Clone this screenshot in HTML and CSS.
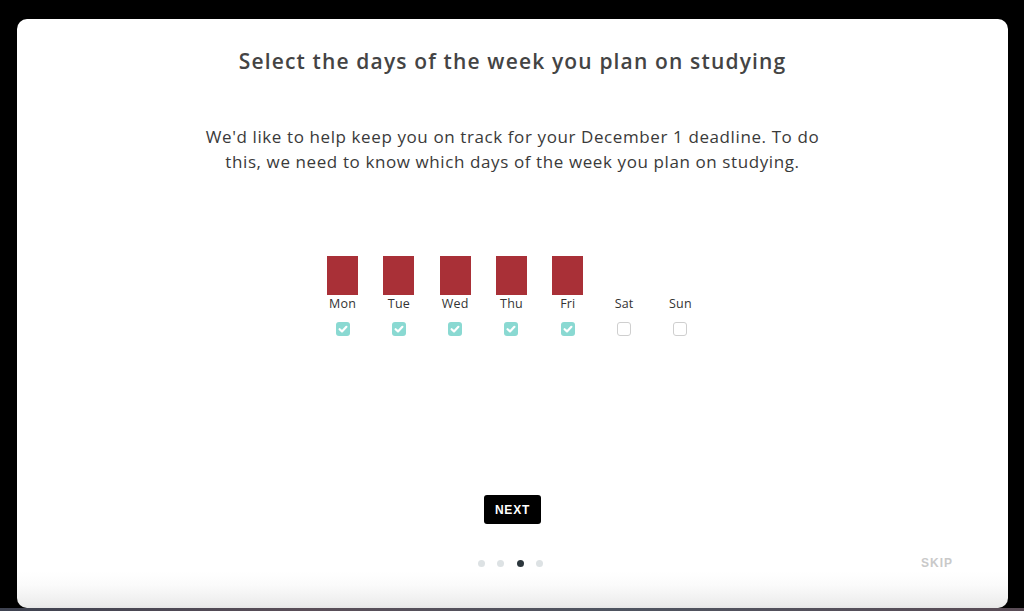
FILE: index.html
```html
<!DOCTYPE html>
<html lang="en">
<head>
<meta charset="utf-8">
<title>Select study days</title>
<link rel="stylesheet" href="styles.css">
</head>
<body>
<div class="card">
  <h1 class="title">Select the days of the week you plan on studying</h1>
  <p class="intro">We'd like to help keep you on track for your December 1 deadline. To do this, we need to know which days of the week you plan on studying.</p>
  <div class="days">
    <div class="day"><div class="bar on"></div><div class="label">Mon</div><span class="check on"><svg viewBox="0 0 14 14" width="14" height="14"><path d="M3.6 7.2 L6 9.4 L10.4 4.8" fill="none" stroke="#fff" stroke-width="2.2" stroke-linecap="round" stroke-linejoin="round"/></svg></span></div>
    <div class="day"><div class="bar on"></div><div class="label">Tue</div><span class="check on"><svg viewBox="0 0 14 14" width="14" height="14"><path d="M3.6 7.2 L6 9.4 L10.4 4.8" fill="none" stroke="#fff" stroke-width="2.2" stroke-linecap="round" stroke-linejoin="round"/></svg></span></div>
    <div class="day"><div class="bar on"></div><div class="label">Wed</div><span class="check on"><svg viewBox="0 0 14 14" width="14" height="14"><path d="M3.6 7.2 L6 9.4 L10.4 4.8" fill="none" stroke="#fff" stroke-width="2.2" stroke-linecap="round" stroke-linejoin="round"/></svg></span></div>
    <div class="day"><div class="bar on"></div><div class="label">Thu</div><span class="check on"><svg viewBox="0 0 14 14" width="14" height="14"><path d="M3.6 7.2 L6 9.4 L10.4 4.8" fill="none" stroke="#fff" stroke-width="2.2" stroke-linecap="round" stroke-linejoin="round"/></svg></span></div>
    <div class="day"><div class="bar on"></div><div class="label">Fri</div><span class="check on"><svg viewBox="0 0 14 14" width="14" height="14"><path d="M3.6 7.2 L6 9.4 L10.4 4.8" fill="none" stroke="#fff" stroke-width="2.2" stroke-linecap="round" stroke-linejoin="round"/></svg></span></div>
    <div class="day"><div class="bar"></div><div class="label">Sat</div><span class="check"></span></div>
    <div class="day"><div class="bar"></div><div class="label">Sun</div><span class="check"></span></div>
  </div>
  <button class="next">NEXT</button>
  <div class="footer">
    <div class="spacer"></div>
    <div class="dots"><span class="dot"></span><span class="dot"></span><span class="dot active"></span><span class="dot"></span></div>
    <div class="skip">SKIP</div>
  </div>
</div>
<div class="strip"></div>
</body>
</html>
```

FILE: styles.css
```css
html, body {
  margin: 0;
  padding: 0;
}
body {
  background: #000;
  width: 1024px;
  height: 611px;
  overflow: hidden;
  display: flex;
  flex-direction: column;
  font-family: "Open Sans", "Liberation Sans", sans-serif;
}
.card {
  margin: 19px 16px 0 17px;
  height: 589px;
  box-sizing: border-box;
  border-radius: 10px;
  background: linear-gradient(to bottom, #ffffff 0, #ffffff 552px, #fbfbfb 566px, #ececec 586px, #e6e6e6 589px);
  display: flex;
  flex-direction: column;
  align-items: center;
  padding-top: 30px;
}
.title {
  margin: 0;
  font-size: 21px;
  line-height: 24px;
  font-weight: 600;
  color: #444;
  letter-spacing: 1.15px;
}
.intro {
  margin: 51px 0 0;
  width: 640px;
  text-align: center;
  font-size: 17px;
  line-height: 25px;
  color: #3a3a3a;
  letter-spacing: 0.6px;
}
.days {
  margin-top: 82px;
  display: flex;
  padding-right: 2px;
}
.day {
  width: 56.3px;
  display: flex;
  flex-direction: column;
  align-items: center;
}
.bar {
  width: 31px;
  height: 39px;
}
.bar.on {
  background: #a93037;
}
.label {
  margin-top: 1px;
  font-size: 12.5px;
  line-height: 16px;
  color: #333;
  letter-spacing: 0.2px;
}
.check {
  margin-top: 10px;
  width: 14px;
  height: 14px;
  box-sizing: border-box;
  border-radius: 3px;
  border: 1px solid #cfcfcf;
  background: #fff;
  display: flex;
}
.check.on {
  border: none;
  background: #8ad9d2;
}
.next {
  margin-top: 159px;
  width: 57px;
  height: 29px;
  border: none;
  border-radius: 3px;
  background: #000;
  color: #fff;
  font-family: "Liberation Sans", "Open Sans", sans-serif;
  font-weight: 700;
  font-size: 12px;
  letter-spacing: 0.8px;
  padding: 0;
}
.footer {
  margin-top: 31px;
  width: 100%;
  display: grid;
  grid-template-columns: 1fr auto 1fr;
  align-items: center;
  height: 16px;
}
.dots {
  display: flex;
  gap: 12.5px;
  margin-right: 4px;
}
.dot {
  width: 7px;
  height: 7px;
  border-radius: 50%;
  background: #dde2e4;
}
.dot.active {
  background: #2b363c;
}
.skip {
  justify-self: end;
  padding-right: 55px;
  font-family: "Liberation Sans", "Open Sans", sans-serif;
  font-weight: 700;
  font-size: 12px;
  letter-spacing: 1px;
  color: #c9c9c9;
}
.strip {
  height: 3px;
  background: linear-gradient(to right, #3e4250, #5a4e58 30%, #4e5460 60%, #5a4c56);
}
```
